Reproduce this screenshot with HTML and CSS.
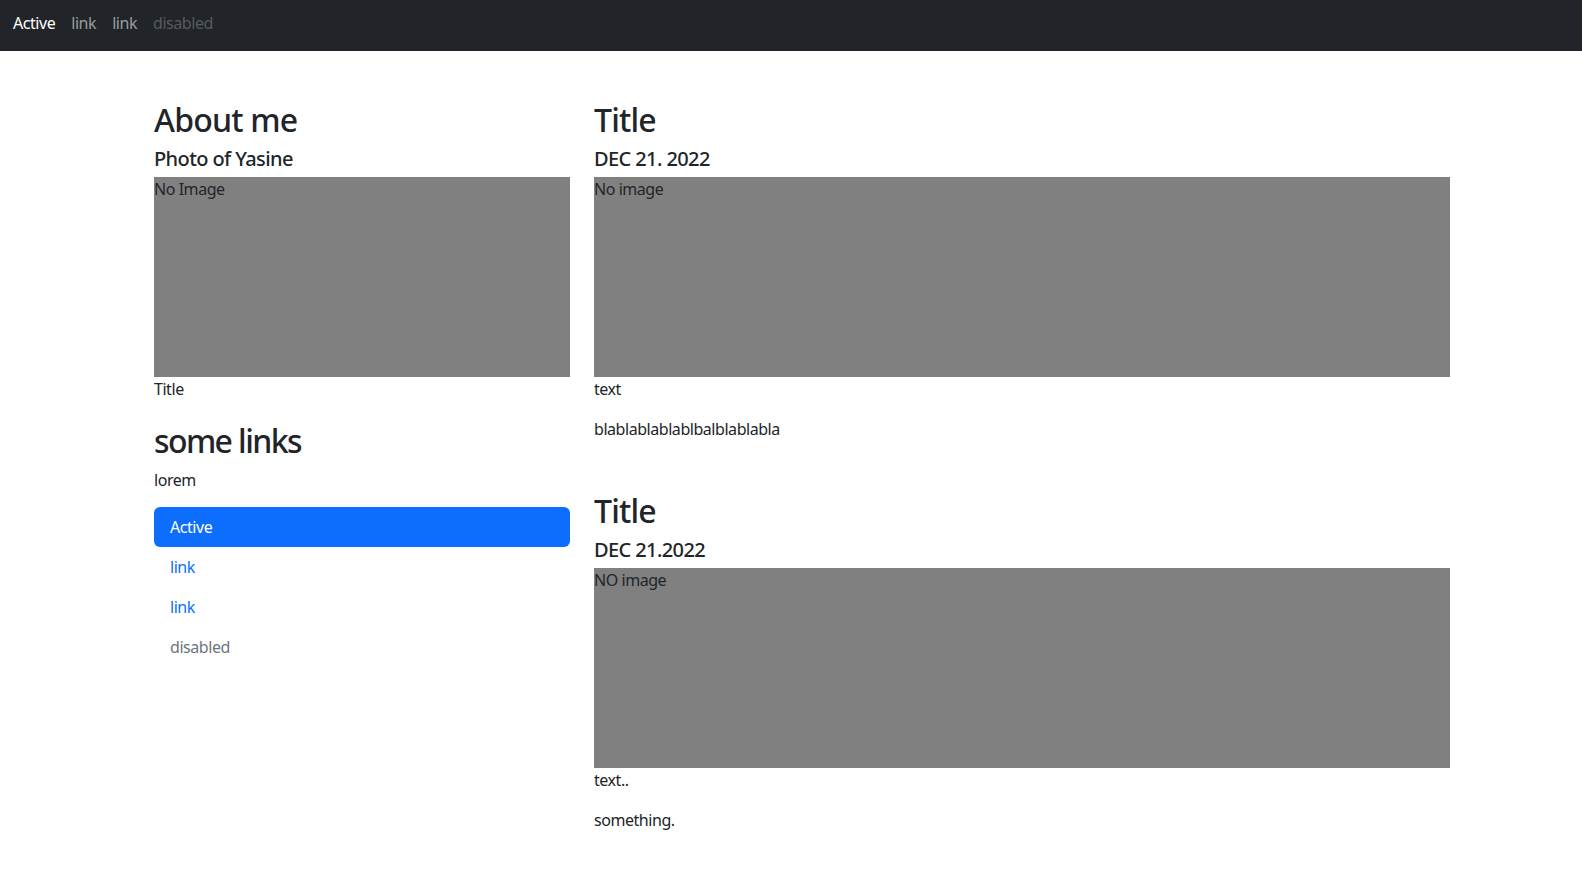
FILE: index.html
```html
<!DOCTYPE html>
<html lang="en">
<head>
<meta charset="utf-8">
<title>About me</title>
<link rel="stylesheet" href="styles.css">
</head>
<body>
<nav class="topbar">
  <a class="top-link is-active" href="#">Active</a>
  <a class="top-link" href="#">link</a>
  <a class="top-link" href="#">link</a>
  <span class="top-link is-disabled">disabled</span>
</nav>
<main class="page">
  <aside class="side">
    <h2 class="h2">About me</h2>
    <h5 class="h5">Photo of Yasine</h5>
    <figure class="fig">
      <div class="ph">No Image</div>
      <figcaption class="cap">Title</figcaption>
    </figure>
    <h2 class="h2 links-title">some links</h2>
    <p class="para lorem">lorem</p>
    <ul class="pills">
      <li><a class="pill is-active" href="#">Active</a></li>
      <li><a class="pill" href="#">link</a></li>
      <li><a class="pill" href="#">link</a></li>
      <li><span class="pill is-disabled">disabled</span></li>
    </ul>
  </aside>
  <section class="posts">
    <article class="post">
      <h2 class="h2">Title</h2>
      <h5 class="h5">DEC 21. 2022</h5>
      <figure class="fig">
        <div class="ph">No image</div>
        <figcaption class="cap">text</figcaption>
      </figure>
      <p class="para post-text">blablablablablbalblablabla</p>
    </article>
    <article class="post">
      <h2 class="h2">Title</h2>
      <h5 class="h5">DEC 21.2022</h5>
      <figure class="fig">
        <div class="ph">NO image</div>
        <figcaption class="cap">text..</figcaption>
      </figure>
      <p class="para post-text">something.</p>
    </article>
  </section>
</main>
</body>
</html>
```
FILE: styles.css
```css
* { box-sizing: border-box; }
html, body { margin: 0; padding: 0; }
body {
  font-family: "Noto Sans", "Open Sans", "Liberation Sans", sans-serif;
  font-size: 16px;
  line-height: 24px;
  color: #212529;
  background: #fff;
  letter-spacing: -0.45px;
}
a { text-decoration: none; }

.topbar {
  height: 51px;
  background: #212529;
  display: flex;
  align-items: flex-start;
  padding: 3px 5px 0;
}
.top-link {
  padding: 8px 8px;
  color: rgba(255,255,255,0.55);
  font-size: 16px;
  line-height: 24px;
}
.top-link.is-active { color: #fff; }
.top-link.is-disabled { color: rgba(255,255,255,0.25); }

.page {
  display: grid;
  grid-template-columns: 416px 856px;
  column-gap: 24px;
  padding: 50px 0 0 154px;
}

.h2 {
  margin: 0 0 8px;
  font-size: 32px;
  line-height: 38px;
  font-weight: 500;
  letter-spacing: -0.8px;
}
.h5 {
  margin: 0 0 6px;
  font-size: 20px;
  line-height: 24px;
  font-weight: 500;
  letter-spacing: -0.6px;
}
.fig { margin: 0; }
.ph {
  height: 200px;
  background: #808080;
  color: #212529;
}
.cap { line-height: 24px; }
.para { margin: 0 0 16px; }
.lorem { margin-bottom: 15px; }

.links-title { margin-top: 21px; letter-spacing: -1.6px; }

.pills {
  list-style: none;
  margin: 0;
  padding: 0;
  display: flex;
  flex-direction: column;
}
.pill {
  display: block;
  padding: 8px 16px;
  color: #0d6efd;
  border-radius: 6px;
}
.pill.is-active { background: #0d6efd; color: #fff; }
.pill.is-disabled { color: #6c757d; }

.posts { display: flex; flex-direction: column; }
.post-text { margin-top: 16px; }
.post { padding-bottom: 35px; }
.post:last-child { padding-bottom: 0; }
```
